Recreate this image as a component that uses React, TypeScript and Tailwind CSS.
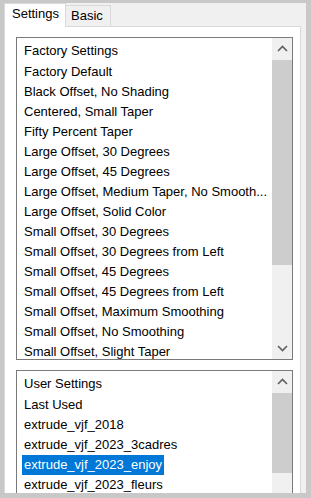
import React from "react";

const factory = [
  "Factory Default",
  "Black Offset, No Shading",
  "Centered, Small Taper",
  "Fifty Percent Taper",
  "Large Offset, 30 Degrees",
  "Large Offset, 45 Degrees",
  "Large Offset, Medium Taper, No Smooth...",
  "Large Offset, Solid Color",
  "Small Offset, 30 Degrees",
  "Small Offset, 30 Degrees from Left",
  "Small Offset, 45 Degrees",
  "Small Offset, 45 Degrees from Left",
  "Small Offset, Maximum Smoothing",
  "Small Offset, No Smoothing",
  "Small Offset, Slight Taper",
];

const user = [
  "Last Used",
  "extrude_vjf_2018",
  "extrude_vjf_2023_3cadres",
  "extrude_vjf_2023_enjoy",
  "extrude_vjf_2023_fleurs",
];

function Chevron({ up }: { up: boolean }) {
  return (
    <svg width="11" height="7" viewBox="0 0 11 7">
      <polyline
        points={up ? "1,6 5.5,1.5 10,6" : "1,1 5.5,5.5 10,1"}
        fill="none"
        stroke="#5f5f5f"
        strokeWidth="1.6"
      />
    </svg>
  );
}

function ListBox({
  header,
  items,
  selected,
  heightClass,
  thumbClass,
  showDown,
}: {
  header: string;
  items: string[];
  selected?: number;
  heightClass: string;
  thumbClass: string;
  showDown: boolean;
}) {
  return (
    <div className={`w-[277px] ${heightClass} border border-[#7a7a7a] flex bg-white shrink-0`}>
      <div className="flex-1 min-w-0 overflow-hidden pl-[5px] pt-[2px]">
        <div className="h-[22px] flex items-center">
          <span className="px-[2px] whitespace-nowrap">{header}</span>
        </div>
        {items.map((t, i) => (
          <div key={t} className="h-[20px] flex items-center">
            <span
              className={
                i === selected
                  ? "px-[2px] whitespace-nowrap bg-[#0078d7] text-white leading-[20px]"
                  : "px-[2px] whitespace-nowrap leading-[20px]"
              }
            >
              {t}
            </span>
          </div>
        ))}
      </div>
      <div className="w-[20px] bg-[#f0f0f0] flex flex-col shrink-0">
        <div className="h-[21px] flex items-center justify-center shrink-0">
          <Chevron up={true} />
        </div>
        <div className={`mt-[1px] bg-[#cdcdcd] shrink-0 ${thumbClass}`} />
        <div className="flex-1" />
        {showDown && (
          <div className="h-[21px] flex items-center justify-center shrink-0">
            <Chevron up={false} />
          </div>
        )}
      </div>
    </div>
  );
}

export default function App() {
  return (
    <div
      className="w-[311px] h-[498px] bg-[#c8c8c8] pl-[4px] pt-[3px] overflow-hidden text-[13px] text-black"
      style={{ fontFamily: '"Liberation Sans", Arial, sans-serif' }}
    >
      <div className="w-[302px] h-[490px] bg-[#f0f0f0] overflow-hidden flex flex-col">
        <div className="h-[23px] flex items-end shrink-0">
          <div className="relative z-10 w-[62px] h-[24px] -mb-px bg-white border border-b-0 border-[#d9d9d9] pl-[7px] pt-[2px] leading-[16px]">
            Settings
          </div>
          <div className="w-[45px] h-[21px] bg-[#f0f0f0] border border-l-0 border-b-0 border-[#d9d9d9] pl-[5px] pt-[2px] leading-[16px]">
            Basic
          </div>
        </div>
        <div className="w-[297px] flex-1 bg-white border border-b-0 border-[#d9d9d9] pt-[10px] pl-[11px] flex flex-col overflow-hidden">
          <ListBox
            header="Factory Settings"
            items={factory}
            heightClass="h-[323px]"
            thumbClass="h-[205px]"
            showDown={true}
          />
          <div className="h-[10px] shrink-0" />
          <ListBox
            header="User Settings"
            items={user}
            selected={3}
            heightClass="h-[200px]"
            thumbClass="h-[80px]"
            showDown={false}
          />
        </div>
      </div>
    </div>
  );
}
